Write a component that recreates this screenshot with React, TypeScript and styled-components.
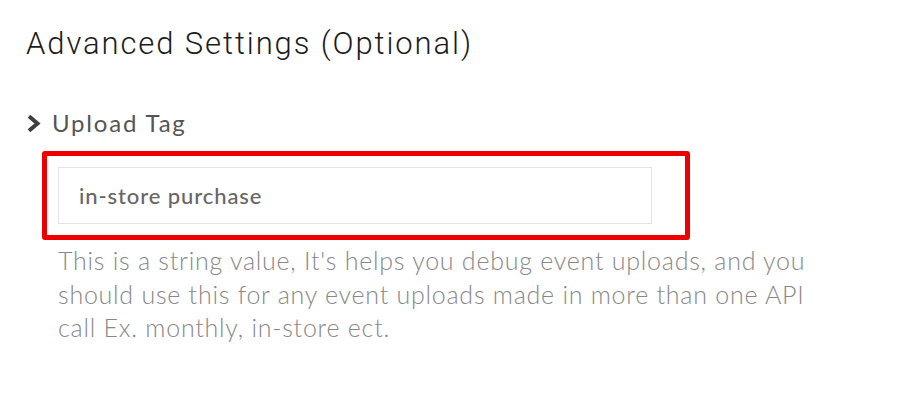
import React from "react";
import styled, { createGlobalStyle } from "styled-components";

const Global = createGlobalStyle`
  html, body {
    margin: 0;
    padding: 0;
    background: #ffffff;
  }
`;

const Page = styled.div`
  width: 900px;
  height: 416px;
  box-sizing: border-box;
  padding: 22px 0 0 26px;
  background: #fff;
`;

const Title = styled.h1`
  margin: 0;
  font-family: Roboto, "Liberation Sans", sans-serif;
  font-weight: 300;
  font-size: 31px;
  line-height: 44px;
  color: #1c1c1c;
  letter-spacing: 1.9px;
`;

const Toggle = styled.div`
  display: flex;
  align-items: center;
  gap: 11px;
  margin-top: 41px;
  font-family: Lato, "Open Sans", sans-serif;
  font-size: 24px;
  font-weight: 400;
  color: #555;
  line-height: 32px;
  letter-spacing: 1.8px;
`;

const Highlight = styled.div`
  margin: 12px 0 0 16px;
  width: 648px;
  height: 89px;
  box-sizing: border-box;
  border: 5px solid #ee0000;
  border-radius: 3px;
  display: flex;
  align-items: center;
  padding-left: 11px;
`;

const Field = styled.div`
  width: 594px;
  height: 57px;
  box-sizing: border-box;
  border: 1px solid #e3e3e3;
  display: flex;
  align-items: center;
  padding-left: 20px;
  font-family: Lato, "Open Sans", sans-serif;
  font-size: 22px;
  font-weight: 500;
  letter-spacing: 0.9px;
  color: #666;
`;

const Help = styled.p`
  margin: 4px 0 0 32px;
  width: 790px;
  font-family: Lato, "Open Sans", sans-serif;
  font-weight: 300;
  font-size: 25px;
  line-height: 33.5px;
  letter-spacing: 0.75px;
  color: #888;
`;

const Chevron = () => (
  <svg width="15" height="19" viewBox="0 0 15 19">
    <path d="M3 2.2 L11.5 9.5 L3 16.8" fill="none" stroke="#3f3f3f" strokeWidth="4" />
  </svg>
);

export default function App() {
  return (
    <Page>
      <Global />
      <Title>Advanced Settings (Optional)</Title>
      <Toggle>
        <Chevron />
        Upload Tag
      </Toggle>
      <Highlight>
        <Field>in-store purchase</Field>
      </Highlight>
      <Help>
        This is a string value, It's helps you debug event uploads, and you
        should use this for any event uploads made in more than one API call
        Ex. monthly, in-store ect.
      </Help>
    </Page>
  );
}
